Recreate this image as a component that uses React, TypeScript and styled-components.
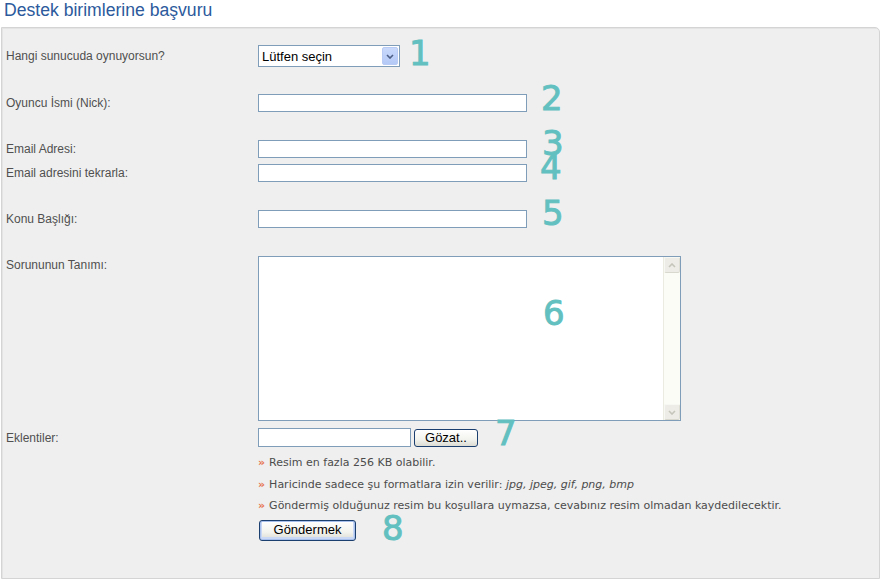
import React from 'react';
import styled, { createGlobalStyle } from 'styled-components';

const GlobalStyle = createGlobalStyle`
  html, body {
    margin: 0;
    padding: 0;
    background: #fff;
    font-family: 'Liberation Sans', Arial, sans-serif;
  }
`;

const Page = styled.div`
  width: 881px;
  height: 581px;
  overflow: hidden;
`;

const Title = styled.h1`
  margin: 0;
  height: 27px;
  padding-left: 4px;
  font-size: 17.6px;
  line-height: 20px;
  font-weight: normal;
  color: #2c5a9c;
`;

const Panel = styled.div`
  box-sizing: border-box;
  margin-left: 1px;
  width: 879px;
  height: 552px;
  padding: 17px 0 0 4px;
  background: #efefef;
  border: 1px solid #d4d4d4;
  border-top-right-radius: 5px;
  box-shadow: inset 1px 1px 0 #e4e4e4;
`;

const Row = styled.div<{ $top: number; $h: number; $start?: boolean }>`
  display: flex;
  align-items: ${(p) => (p.$start ? 'flex-start' : 'center')};
  margin-top: ${(p) => p.$top}px;
  height: ${(p) => p.$h}px;
`;

const Label = styled.label<{ $pad?: number }>`
  flex-shrink: 0;
  width: 252px;
  padding-top: ${(p) => p.$pad ?? 0}px;
  font-size: 12px;
  line-height: 14px;
  color: #505050;
`;

const Marker = styled.span<{ $left: number; $up: number }>`
  margin-left: ${(p) => p.$left}px;
  font-family: 'DejaVu Sans', sans-serif;
  font-size: 34px;
  line-height: 34px;
  color: #62c0c0;
  -webkit-text-stroke: 0.9px #62c0c0;
  transform: translateY(-${(p) => p.$up}px);
`;

const SelectWrap = styled.div`
  position: relative;
  box-sizing: border-box;
  width: 142px;
  height: 22px;
  border: 1px solid #7f9db9;
  background: #fff;
`;

const Select = styled.select`
  appearance: none;
  box-sizing: border-box;
  width: 100%;
  height: 100%;
  margin: 0;
  padding: 0 0 0 3px;
  border: none;
  outline: none;
  background: transparent;
  font-family: 'Liberation Sans', Arial, sans-serif;
  font-size: 13px;
  color: #000;
`;

const ArrowButton = styled.span`
  position: absolute;
  top: 1px;
  right: 1px;
  bottom: 1px;
  box-sizing: border-box;
  width: 16px;
  display: flex;
  align-items: center;
  justify-content: center;
  background: linear-gradient(#c9d9fc, #b4c9f6);
  border: 1px solid #b7cbf4;
  border-radius: 2px;
  pointer-events: none;
`;

const TextInput = styled.input<{ $w: number }>`
  box-sizing: border-box;
  width: ${(p) => p.$w}px;
  height: 18px;
  margin: 0;
  padding: 0 2px;
  border: 1px solid #7f9db9;
  background: #fff;
  font-family: 'Liberation Sans', Arial, sans-serif;
  font-size: 13px;
`;

const FileInput = styled(TextInput)`
  height: 19px;
`;

const AreaBox = styled.div`
  position: relative;
  box-sizing: border-box;
  display: flex;
  width: 423px;
  height: 165px;
  border: 1px solid #7f9db9;
  background: #fff;
`;

const TextArea = styled.textarea`
  flex: 1;
  margin: 0;
  padding: 2px;
  border: none;
  outline: none;
  resize: none;
  font-family: 'Liberation Sans', Arial, sans-serif;
  font-size: 13px;
`;

const ScrollTrack = styled.div`
  box-sizing: border-box;
  width: 17px;
  display: flex;
  flex-direction: column;
  justify-content: space-between;
  padding: 0 0 0 1px;
  background: #fcfcf6;
  border-left: 1px solid #ecebe2;
`;

const ScrollButton = styled.div`
  box-sizing: border-box;
  width: 16px;
  height: 16px;
  margin-left: -1px;
  display: flex;
  align-items: center;
  justify-content: center;
  background: #edece6;
  border: 1px solid #f7f7f3;
  border-bottom-color: #d9d8cf;
  border-right-color: #e0dfd6;
  border-radius: 2px;
`;

const AreaMarker = styled(Marker)`
  position: absolute;
  left: 284px;
  top: 39px;
  margin: 0;
  transform: none;
`;

const XpButton = styled.button<{ $w: number; $h: number; $gap?: number; $focus?: boolean }>`
  box-sizing: border-box;
  width: ${(p) => p.$w}px;
  height: ${(p) => p.$h}px;
  margin: 0 0 0 ${(p) => p.$gap ?? 0}px;
  padding: 0;
  border: 1px solid #1b3f6e;
  border-radius: 3px;
  background: linear-gradient(#ffffff, #f2f2ee 60%, #dcdcd4);
  box-shadow: ${(p) => (p.$focus ? 'inset 0 0 0 1px #a8c0ec, inset 0 -1px 0 2px #c9d8f4' : 'none')};
  font-family: 'Liberation Sans', Arial, sans-serif;
  font-size: 13px;
  font-weight: normal;
  line-height: 14px;
  color: #000;
`;

const Hints = styled.div`
  margin: 5px 0 0 252px;
`;

const Hint = styled.div`
  font-family: 'DejaVu Sans', Verdana, sans-serif;
  font-size: 11px;
  line-height: 21.5px;
  color: #4c4c4c;
  white-space: nowrap;

  &::before {
    content: '»';
    margin-right: 4px;
    color: #e6724e;
    font-weight: bold;
  }

  em {
    font-style: italic;
  }
`;

const SubmitRow = styled.div`
  display: flex;
  align-items: center;
  height: 21px;
  margin: 3px 0 0 253px;
`;

const Chevron = ({ up, color }: { up?: boolean; color: string }) => (
  <svg width="8" height="5" viewBox="0 0 8 5">
    <path
      d={up ? 'M1 4 L4 1 L7 4' : 'M1 1 L4 4 L7 1'}
      fill="none"
      stroke={color}
      strokeWidth="1.6"
    />
  </svg>
);

export default function App() {
  return (
    <Page>
      <GlobalStyle />
      <Title>Destek birimlerine başvuru</Title>
      <Panel>
        <Row $top={0} $h={22}>
          <Label>Hangi sunucuda oynuyorsun?</Label>
          <SelectWrap>
            <Select defaultValue="">
              <option value="">Lütfen seçin</option>
            </Select>
            <ArrowButton>
              <Chevron color="#4d5f86" />
            </ArrowButton>
          </SelectWrap>
          <Marker $left={9} $up={3}>1</Marker>
        </Row>

        <Row $top={27} $h={18}>
          <Label>Oyuncu İsmi (Nick):</Label>
          <TextInput $w={269} />
          <Marker $left={14} $up={5}>2</Marker>
        </Row>

        <Row $top={28} $h={18}>
          <Label>Email Adresi:</Label>
          <TextInput $w={269} />
          <Marker $left={15} $up={6}>3</Marker>
        </Row>

        <Row $top={6} $h={18}>
          <Label>Email adresini tekrarla:</Label>
          <TextInput $w={269} />
          <Marker $left={13} $up={6}>4</Marker>
        </Row>

        <Row $top={28} $h={18}>
          <Label>Konu Başlığı:</Label>
          <TextInput $w={269} />
          <Marker $left={15} $up={6}>5</Marker>
        </Row>

        <Row $top={28} $h={165} $start>
          <Label $pad={2}>Sorununun Tanımı:</Label>
          <AreaBox>
            <TextArea />
            <ScrollTrack>
              <ScrollButton>
                <Chevron up color="#c6c5bc" />
              </ScrollButton>
              <ScrollButton>
                <Chevron color="#c6c5bc" />
              </ScrollButton>
            </ScrollTrack>
            <AreaMarker $left={0} $up={0}>6</AreaMarker>
          </AreaBox>
        </Row>

        <Row $top={7} $h={19}>
          <Label>Eklentiler:</Label>
          <FileInput $w={153} />
          <XpButton $w={64} $h={18} $gap={3}>
            Gözat..
          </XpButton>
          <Marker $left={17} $up={5}>7</Marker>
        </Row>

        <Hints>
          <Hint>Resim en fazla 256 KB olabilir.</Hint>
          <Hint>
            Haricinde sadece şu formatlara izin verilir: <em>jpg, jpeg, gif, png, bmp</em>
          </Hint>
          <Hint>Göndermiş olduğunuz resim bu koşullara uymazsa, cevabınız resim olmadan kaydedilecektir.</Hint>
        </Hints>

        <SubmitRow>
          <XpButton $w={97} $h={21} $focus>
            Göndermek
          </XpButton>
          <Marker $left={26} $up={2}>8</Marker>
        </SubmitRow>
      </Panel>
    </Page>
  );
}
